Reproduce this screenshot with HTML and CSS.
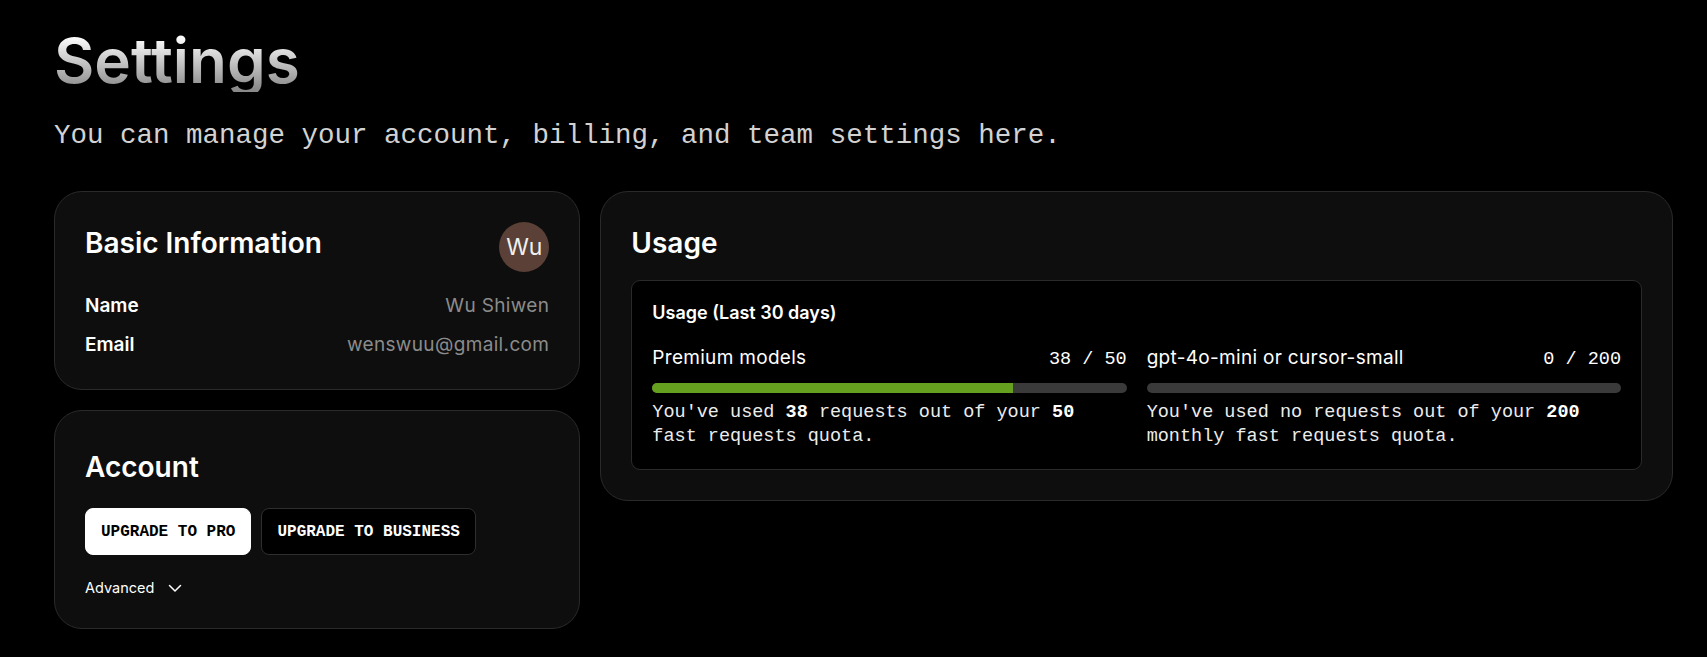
FILE: index.html
```html
<!DOCTYPE html>
<html lang="en">
<head>
<meta charset="utf-8">
<title>Settings</title>
<link rel="stylesheet" href="styles.css">
</head>
<body>
<main class="page">
  <header class="page-header">
    <h1 class="page-title">Settings</h1>
    <p class="page-subtitle">You can manage your account, billing, and team settings here.</p>
  </header>

  <div class="grid">
    <div class="left-col">
      <section class="card card-basic">
        <div class="card-head">
          <h2 class="card-title">Basic Information</h2>
          <div class="avatar">Wu</div>
        </div>
        <div class="info-rows">
          <div class="info-row">
            <span class="info-label">Name</span>
            <span class="info-value">Wu Shiwen</span>
          </div>
          <div class="info-row">
            <span class="info-label">Email</span>
            <span class="info-value">wenswuu@gmail.com</span>
          </div>
        </div>
      </section>

      <section class="card card-account">
        <h2 class="card-title">Account</h2>
        <div class="btn-row">
          <button class="btn btn-light">UPGRADE TO PRO</button>
          <button class="btn btn-dark">UPGRADE TO BUSINESS</button>
        </div>
        <div class="advanced">
          <span>Advanced</span>
          <svg class="chev" width="16" height="16" viewBox="0 0 16 16" fill="none" stroke="currentColor" stroke-width="1.5" stroke-linecap="round" stroke-linejoin="round"><path d="M2.5 5.5 L8 11 L13.5 5.5"/></svg>
        </div>
      </section>
    </div>

    <section class="card card-usage">
      <h2 class="card-title">Usage</h2>
      <div class="usage-box">
        <div class="usage-head">Usage (Last 30 days)</div>
        <div class="usage-cols">
          <div class="usage-col">
            <div class="usage-label-row">
              <span class="usage-label">Premium models</span>
              <span class="usage-count">38 / 50</span>
            </div>
            <div class="bar"><div class="bar-fill" style="width: 76%"></div></div>
            <p class="usage-desc">You've used <b>38</b> requests out of your <b>50</b> fast requests quota.</p>
          </div>
          <div class="usage-col">
            <div class="usage-label-row">
              <span class="usage-label">gpt-4o-mini or cursor-small</span>
              <span class="usage-count">0 / 200</span>
            </div>
            <div class="bar"><div class="bar-fill" style="width: 0%"></div></div>
            <p class="usage-desc">You've used no requests out of your <b>200</b> monthly fast requests quota.</p>
          </div>
        </div>
      </div>
    </section>
  </div>
</main>
</body>
</html>
```

FILE: styles.css
```css
* { box-sizing: border-box; }

html, body {
  margin: 0;
  background: #000;
}

body {
  font-family: Inter, "Noto Sans", sans-serif;
  color: #fff;
}

.page {
  padding: 30px 34px 0 54px;
}

.page-title {
  margin: 0;
  font-size: 62px;
  line-height: 62px;
  font-weight: 600;
  background: linear-gradient(to bottom, #ffffff 10%, #8a8a8a 95%);
  -webkit-background-clip: text;
  background-clip: text;
  color: transparent;
  display: inline-block;
}

.page-subtitle {
  margin: 26px 0 0;
  font-family: "Liberation Mono", "DejaVu Sans Mono", monospace;
  font-size: 27.5px;
  line-height: 36px;
  color: #d2d2d2;
}

.grid {
  margin-top: 37px;
  display: grid;
  grid-template-columns: repeat(3, 1fr);
  gap: 20px;
  align-items: start;
}

.left-col {
  display: flex;
  flex-direction: column;
  gap: 20px;
}

.card {
  background: #0e0e0e;
  border: 1px solid #2a2a2a;
  border-radius: 28px;
  padding: 30px;
}

.card-title {
  margin: 0;
  font-size: 28px;
  line-height: 42px;
  font-weight: 600;
  color: #fff;
}

.card-head {
  display: flex;
  justify-content: space-between;
  align-items: flex-start;
}

.avatar {
  width: 50px;
  height: 50px;
  border-radius: 50%;
  background: #5b4037;
  color: #f0f0f0;
  font-size: 23px;
  display: flex;
  align-items: center;
  justify-content: center;
}

.info-rows {
  margin-top: 20px;
  display: flex;
  flex-direction: column;
  gap: 11px;
}

.info-row {
  display: flex;
  justify-content: space-between;
  font-size: 19px;
  line-height: 28px;
}

.info-label {
  font-weight: 600;
  color: #fff;
}

.info-value {
  color: #8b8b8b;
  letter-spacing: 0.35px;
}

.card-account {
  padding-top: 35px;
}

.btn-row {
  margin-top: 20px;
  display: flex;
  gap: 10px;
}

.btn {
  font-family: "Liberation Mono", "DejaVu Sans Mono", monospace;
  font-weight: 700;
  font-size: 16px;
  line-height: 24px;
  height: 47px;
  padding: 0 15px;
  border-radius: 8px;
  cursor: pointer;
}

.btn-light {
  background: #fff;
  color: #000;
  border: 1px solid #fff;
}

.btn-dark {
  background: #000;
  color: #fff;
  border: 1px solid #2e2e2e;
}

.advanced {
  margin-top: 23px;
  display: flex;
  align-items: center;
  font-size: 14.5px;
  line-height: 20px;
  color: #fff;
}

.chev {
  margin-left: 13px;
  color: #fff;
}

.card-usage {
  grid-column: span 2;
}

.usage-box {
  margin-top: 16px;
  background: #000;
  border: 1px solid #2a2a2a;
  border-radius: 9px;
  padding: 20px;
}

.usage-head {
  font-size: 18px;
  line-height: 24px;
  font-weight: 600;
}

.usage-cols {
  margin-top: 19px;
  display: grid;
  grid-template-columns: 1fr 1fr;
  gap: 20px;
}

.usage-label-row {
  display: flex;
  justify-content: space-between;
  align-items: baseline;
  line-height: 28px;
}

.usage-label {
  font-size: 19px;
  letter-spacing: 0.3px;
  color: #fff;
}

.usage-count {
  font-family: "Liberation Mono", "DejaVu Sans Mono", monospace;
  font-size: 18.5px;
  font-weight: 400;
  color: #fff;
}

.bar {
  margin-top: 9px;
  height: 10px;
  border-radius: 5px;
  background: #3a3a3a;
  overflow: hidden;
}

.bar-fill {
  height: 100%;
  background: #65a11e;
}

.usage-desc {
  margin: 8px 0 0;
  font-family: "Liberation Mono", "DejaVu Sans Mono", monospace;
  font-size: 18.5px;
  line-height: 24px;
  color: #ececec;
}

.usage-desc b {
  font-weight: 700;
  color: #fff;
}
```
